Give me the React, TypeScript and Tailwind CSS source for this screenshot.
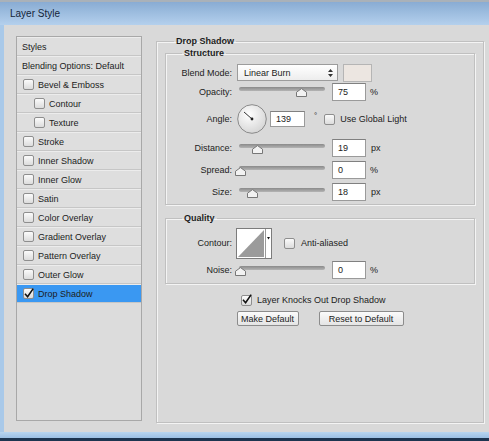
import React from 'react';

const Check: React.FC<{ on?: boolean }> = ({ on = false }) => (
  <span className="relative flex h-[11px] w-[11px] shrink-0 items-center justify-center rounded-[2px] border border-[#8e8e8e] bg-gradient-to-b from-[#fbfbfb] to-[#dcdcdc]">
    {on && (
      <svg width="12" height="12" viewBox="0 0 12 12" className="overflow-visible">
        <path d="M2 5.8 L4.6 8.8 L10.2 0.6" fill="none" stroke="#111" strokeWidth="1.6" />
      </svg>
    )}
  </span>
);

const Thumb: React.FC = () => (
  <svg width="11" height="9" viewBox="0 0 11 9">
    <path d="M0.5 8.5 V4.2 L5.5 0.6 L10.5 4.2 V8.5 Z" fill="#f2f2f2" stroke="#777" strokeWidth="1" />
  </svg>
);

const Slider: React.FC<{ at: string }> = ({ at }) => (
  <div className="relative ml-[7px] h-[19px] w-[86px] shrink-0">
    <div className="absolute left-0 right-0 top-[5px] h-[4px] rounded-full bg-gradient-to-b from-[#8a8a8a] to-[#b4b4b4]" />
    <div className={`absolute top-[6px] ${at} flex`}>
      <Thumb />
    </div>
  </div>
);

const NumBox: React.FC<{ v: string; w?: string; h?: string; ml?: string }> = ({ v, w = 'w-[34px]', h = 'h-[18px]', ml = 'ml-[7px]' }) => (
  <div className={`${ml} ${w} ${h} flex shrink-0 items-center border border-[#9a9a9a] border-t-[#808080] bg-white pl-[5px] text-[9px] text-[#222]`}>
    {v}
  </div>
);

const Label: React.FC<{ t: string }> = ({ t }) => (
  <div className="w-[66px] shrink-0 text-right text-[9px] text-[#222]">{t}</div>
);

const listRows: { t: string; box?: boolean; indent?: boolean; on?: boolean; sel?: boolean }[] = [
  { t: 'Styles' },
  { t: 'Blending Options: Default' },
  { t: 'Bevel & Emboss', box: true },
  { t: 'Contour', box: true, indent: true },
  { t: 'Texture', box: true, indent: true },
  { t: 'Stroke', box: true },
  { t: 'Inner Shadow', box: true },
  { t: 'Inner Glow', box: true },
  { t: 'Satin', box: true },
  { t: 'Color Overlay', box: true },
  { t: 'Gradient Overlay', box: true },
  { t: 'Pattern Overlay', box: true },
  { t: 'Outer Glow', box: true },
  { t: 'Drop Shadow', box: true, on: true, sel: true },
];

const group = 'border border-[#c0c0c0] shadow-[inset_1px_1px_0_#f4f4f4,1px_1px_0_#f4f4f4]';

const App: React.FC = () => {
  return (
    <div className="flex h-[441px] w-[489px] flex-col overflow-hidden bg-[#d9d9d9] font-['Liberation_Sans',Arial,sans-serif] leading-[12px] text-[#1c1c1c]">
      {/* title bar */}
      <div className="flex h-[25px] shrink-0 items-center border-t-2 border-[#a9b1b9] bg-gradient-to-b from-[#89acd3] to-[#b4d0ed] pl-[10px]">
        <span className="text-[10px] text-[#14253a]">Layer Style</span>
      </div>

      {/* body */}
      <div className="flex h-[407px] shrink-0 border-l-4 border-[#a9c9e9] pl-[12px] pt-[11px]">
        {/* styles list */}
        <div className="flex h-[385px] w-[126px] shrink-0 flex-col border border-[#a8a8a8] bg-[#dcdcdc]">
          {listRows.map((r) => (
            <div
              key={r.t}
              className={`flex h-[19px] shrink-0 items-center gap-[4px] border-b border-t border-b-[#c6c6c6] border-t-[#ececec] text-[9px] ${
                r.sel ? 'border-t-[#3a98f2] bg-[#3a98f2]' : 'bg-[#dedede]'
              } ${r.box ? (r.indent ? 'pl-[17px]' : 'pl-[6px]') : 'pl-[5px]'}`}
            >
              {r.box && <Check on={r.on} />}
              <span>{r.t}</span>
            </div>
          ))}
        </div>

        {/* settings */}
        <fieldset className={`-mt-[1px] ml-[14px] h-[388px] w-[328px] shrink-0 ${group}`}>
          <legend className="ml-[17px] px-[2px] text-[9px] font-bold">Drop Shadow</legend>

          <fieldset className={`mx-[8px] ${group}`}>
            <legend className="ml-[16px] px-[2px] text-[9px] font-bold">Structure</legend>
            <div className="flex flex-col pb-[1px] pt-[4px]">
              <div className="flex h-[19px] items-center">
                <Label t="Blend Mode:" />
                <div className="ml-[5px] flex h-[17px] w-[101px] items-center justify-between border border-[#9c9c9c] bg-gradient-to-b from-white to-[#ededed] pl-[6px] pr-[4px] text-[9px]">
                  <span>Linear Burn</span>
                  <svg width="5" height="8" viewBox="0 0 5 8">
                    <path d="M2.5 0 L5 3 H0 Z M0 5 H5 L2.5 8 Z" fill="#333" />
                  </svg>
                </div>
                <div className="ml-[5px] h-[18px] w-[29px] border border-[#b5b5b5] bg-[#ece6e1]" />
              </div>

              <div className="flex h-[19px] items-center">
                <Label t="Opacity:" />
                <Slider at="left-[57px]" />
                <NumBox v="75" />
                <span className="ml-[4px] text-[9px]">%</span>
              </div>

              <div className="flex h-[36px] items-center">
                <Label t="Angle:" />
                <svg width="30" height="30" viewBox="0 0 30 30" className="ml-[5px] shrink-0">
                  <defs>
                    <radialGradient id="dial" cx="40%" cy="35%" r="70%">
                      <stop offset="0%" stopColor="#ffffff" />
                      <stop offset="100%" stopColor="#d4d4d4" />
                    </radialGradient>
                  </defs>
                  <circle cx="15" cy="15" r="14.3" fill="url(#dial)" stroke="#8a8a8a" strokeWidth="1" />
                  <line x1="15" y1="15" x2="7" y2="8" stroke="#333" strokeWidth="1" />
                  <circle cx="15" cy="15" r="1.4" fill="#222" />
                </svg>
                <NumBox v="139" w="w-[35px]" h="h-[16px]" ml="ml-[3px]" />
                <span className="ml-[9px] -translate-y-[3px] text-[8px]">°</span>
                <span className="ml-[7px]">
                  <Check />
                </span>
                <span className="ml-[5px] text-[9px]">Use Global Light</span>
              </div>

              <div className="flex h-[22px] items-center">
                <Label t="Distance:" />
                <Slider at="left-[13px]" />
                <NumBox v="19" />
                <span className="ml-[5px] text-[9px]">px</span>
              </div>

              <div className="flex h-[22px] items-center">
                <Label t="Spread:" />
                <Slider at="-left-[4px]" />
                <NumBox v="0" />
                <span className="ml-[4px] text-[9px]">%</span>
              </div>

              <div className="flex h-[22px] items-center">
                <Label t="Size:" />
                <Slider at="left-[8px]" />
                <NumBox v="18" />
                <span className="ml-[5px] text-[9px]">px</span>
              </div>
            </div>
          </fieldset>

          <fieldset className={`mx-[8px] mt-[7px] ${group}`}>
            <legend className="ml-[16px] px-[2px] text-[9px] font-bold">Quality</legend>
            <div className="flex flex-col pb-[3px] pt-[2px]">
              <div className="flex h-[34px] items-center">
                <Label t="Contour:" />
                <svg width="36" height="31" viewBox="0 0 36 31" className="ml-[4px] shrink-0">
                  <rect x="0.5" y="0.5" width="35" height="30" fill="#ffffff" stroke="#7c7c7c" />
                  <polygon points="2,29 28,2 28,29" fill="#9b9b9b" />
                  <line x1="29.5" y1="1" x2="29.5" y2="30" stroke="#9a9a9a" />
                  <polygon points="31,9 34,9 32.5,11.5" fill="#111" />
                </svg>
                <span className="ml-[12px]">
                  <Check />
                </span>
                <span className="ml-[6px] text-[9px]">Anti-aliased</span>
              </div>

              <div className="flex h-[20px] items-center">
                <Label t="Noise:" />
                <Slider at="-left-[4px]" />
                <NumBox v="0" />
                <span className="ml-[4px] text-[9px]">%</span>
              </div>
            </div>
          </fieldset>

          <div className="ml-[84px] mt-[8px] flex h-[16px] items-center gap-[5px] text-[9px]">
            <Check on />
            <span>Layer Knocks Out Drop Shadow</span>
          </div>

          <div className="mt-[3px] flex justify-center gap-[20px]">
            <button className="h-[15px] w-[62px] rounded-[2px] border border-[#8c8c8c] bg-gradient-to-b from-[#fbfbfb] to-[#e4e4e4] text-[9px] leading-[12px]">
              Make Default
            </button>
            <button className="h-[15px] w-[85px] rounded-[2px] border border-[#8c8c8c] bg-gradient-to-b from-[#fbfbfb] to-[#e4e4e4] text-[9px] leading-[12px]">
              Reset to Default
            </button>
          </div>
        </fieldset>
      </div>

      {/* bottom frame */}
      <div className="h-[9px] shrink-0 border-b-[3px] border-[#1d3550] bg-gradient-to-b from-[#b9d6f0] to-[#9cc0e4]" />
    </div>
  );
};

export default App;
